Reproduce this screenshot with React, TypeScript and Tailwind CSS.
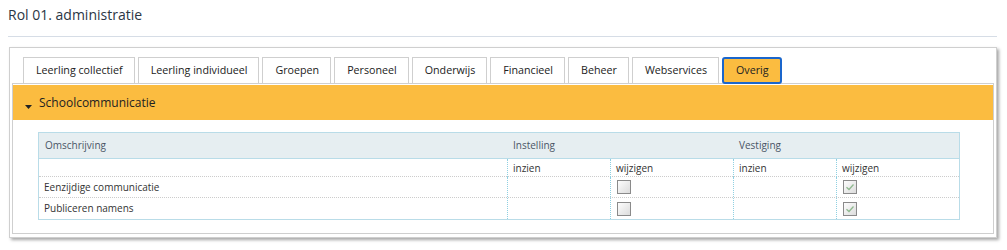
import React from "react";

const tabs = [
  "Leerling collectief",
  "Leerling individueel",
  "Groepen",
  "Personeel",
  "Onderwijs",
  "Financieel",
  "Beheer",
  "Webservices",
];

function Box({ checked }: { checked?: boolean }) {
  return (
    <div className="w-[14px] h-[14px] border border-[#8a8a8a] bg-gradient-to-br from-[#fdfdfd] to-[#dcdcdc] flex items-center justify-center">
      {checked && (
        <svg width="10" height="10" viewBox="0 0 10 10">
          <path d="M1.5 5.2 L4 7.5 L8.5 2.5" fill="none" stroke="#8fb98f" strokeWidth="1.3" />
        </svg>
      )}
    </div>
  );
}

export default function App() {
  const font = { fontFamily: '"Open Sans", "Noto Sans", sans-serif' };
  return (
    <div className="w-[1007px] h-[250px] bg-white text-[#333]" style={font}>
      <div className="pl-[8px] pt-[5px] pr-[10px]">
        <div className="text-[14px] leading-[20px] text-[#2b3644] h-[31px]">Rol 01. administratie</div>
        <div className="border-t border-[#d6dde6]" />
      </div>
      <div className="ml-[9px] mr-[10px] mt-[10px] border border-[#cfcfcf] shadow-[2px_2px_3px_rgba(0,0,0,0.35)] bg-white">
        <div className="flex gap-[3px] pl-[13px] pt-[9px] relative z-10">
          {tabs.map((t) => (
            <div
              key={t}
              className="h-[27px] pl-[12px] pr-[11px] border border-[#cfcfcf] bg-white text-[10.7px] flex items-center text-[#222] -mb-[1px]"
            >
              {t}
            </div>
          ))}
          <div className="h-[27px] pl-[12px] pr-[11px] border-2 border-[#1a66cc] rounded-[3px] bg-[#fbbc40] text-[10.7px] flex items-center text-[#222] -mb-[1px]">
            Overig
          </div>
        </div>
        <div className="mx-[2px] mb-[3px] border border-[#cfcfcf] pt-[1px] px-[0px]">
          <div className="bg-[#fbbc40] h-[35px] flex items-center pl-[12px] text-[12px] text-[#222]">
            <svg width="7" height="4" viewBox="0 0 7 4" className="mt-[8px] mr-[7px]">
              <path d="M0 0 L7 0 L3.5 4 Z" fill="#222" />
            </svg>
            Schoolcommunicatie
          </div>
          <div className="pt-[12px] pl-[25px] pb-[13px]">
            <div className="w-[922px] border border-[#b9dce8] text-[10px]">
              <div className="grid grid-cols-[468px_226px_226px] h-[26px] bg-[#e6eef1] text-[#4a5566] border-b border-[#b9dce8] items-center">
                <div className="pl-[6px]">Omschrijving</div>
                <div className="pl-[6px]">Instelling</div>
                <div className="pl-[6px]">Vestiging</div>
              </div>
              <div className="grid grid-cols-[468px_103px_123px_103px_123px] h-[18px] border-b border-dotted border-[#cccccc] items-stretch text-[#333]">
                <div />
                <div className="pl-[5px] border-l border-dotted border-[#8fd0e2] leading-[18px]">inzien</div>
                <div className="pl-[5px] border-l border-dotted border-[#8fd0e2] leading-[18px]">wijzigen</div>
                <div className="pl-[5px] border-l border-dotted border-[#8fd0e2] leading-[18px]">inzien</div>
                <div className="pl-[5px] border-l border-dotted border-[#8fd0e2] leading-[18px]">wijzigen</div>
              </div>
              {["Eenzijdige communicatie", "Publiceren namens"].map((r, i) => (
                <div
                  key={r}
                  className={`grid grid-cols-[468px_103px_123px_103px_123px] h-[21px] items-stretch text-[#333] ${i === 0 ? "border-b border-dotted border-[#cccccc]" : ""}`}
                >
                  <div className="pl-[5px] leading-[20px]">{r}</div>
                  <div className="border-l border-dotted border-[#8fd0e2]" />
                  <div className="pl-[6px] border-l border-dotted border-[#8fd0e2] flex items-center">
                    <Box />
                  </div>
                  <div className="border-l border-dotted border-[#8fd0e2]" />
                  <div className="pl-[6px] border-l border-dotted border-[#8fd0e2] flex items-center">
                    <Box checked />
                  </div>
                </div>
              ))}
            </div>
          </div>
        </div>
      </div>
    </div>
  );
}
